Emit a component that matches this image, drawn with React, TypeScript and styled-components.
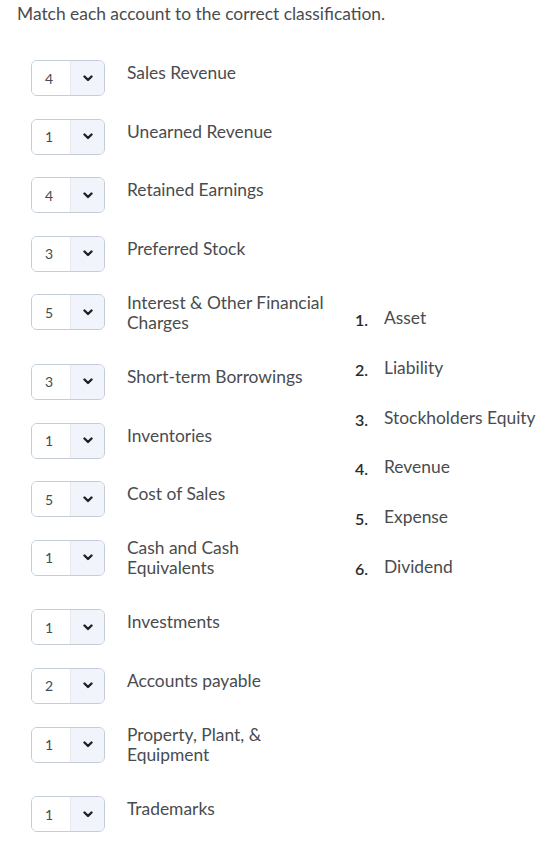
import React from "react";
import styled, { createGlobalStyle } from "styled-components";

const GlobalStyle = createGlobalStyle`
  html, body { margin: 0; padding: 0; background: #ffffff; }
  body { font-family: Lato, "Open Sans", "Liberation Sans", sans-serif; color: #494c4e; }
`;

const Page = styled.div`
  padding: 4px 0 0 17px;
  width: 560px;
  box-sizing: border-box;
`;

const Prompt = styled.p`
  margin: 0;
  font-size: 17.4px;
  line-height: 20px;
  color: #494c4e;
`;

const Content = styled.div`
  display: flex;
  align-items: center;
  gap: 27px;
  margin: 36px 0 0 14px;
`;

const Rows = styled.div`
  display: flex;
  flex-direction: column;
  gap: 22.6px;
`;

const Row = styled.div<{ $wrap?: boolean }>`
  display: flex;
  align-items: flex-start;
  gap: 22px;
  height: ${(p) => (p.$wrap ? 47 : 36)}px;
`;

const SelectBox = styled.div`
  display: flex;
  width: 74px;
  height: 36px;
  box-sizing: border-box;
  border: 1px solid #c4ccd6;
  border-radius: 6px;
  overflow: hidden;
  flex: none;
`;

const SelectValue = styled.div`
  width: 39px;
  display: flex;
  align-items: center;
  padding-left: 13px;
  box-sizing: border-box;
  font-size: 14px;
  color: #494c4e;
  background: #ffffff;
  border-right: 1px solid #e6eaf0;
`;

const SelectArrow = styled.div`
  flex: 1;
  display: flex;
  align-items: center;
  justify-content: center;
  background: #f1f5fb;
  color: #202122;
`;

const Label = styled.div<{ $wrap?: boolean }>`
  width: 201px;
  font-size: 17.4px;
  line-height: 20px;
  color: #494c4e;
  margin-top: ${(p) => (p.$wrap ? -1.5 : 3)}px;
`;

const Choices = styled.ol`
  list-style: none;
  margin: 0 0 5px 0;
  padding: 0;
  display: flex;
  flex-direction: column;
  gap: 27.7px;
`;

const Choice = styled.li`
  display: flex;
  align-items: flex-start;
  font-size: 17.4px;
  line-height: 20px;
  color: #494c4e;
`;

const ChoiceNum = styled.span`
  width: 29px;
  flex: none;
  padding-top: 2px;
  font-weight: 600;
  color: #2a2b2c;
  font-size: 16px;
`;

const Chevron = () => (
  <svg width="10" height="7" viewBox="0 0 10 7" aria-hidden="true">
    <path d="M1.5 1.5 L5 5 L8.5 1.5" fill="none" stroke="currentColor" strokeWidth="2.4" strokeLinecap="round" strokeLinejoin="round" />
  </svg>
);

const items: { value: number; label: string; wrap?: boolean }[] = [
  { value: 4, label: "Sales Revenue" },
  { value: 1, label: "Unearned Revenue" },
  { value: 4, label: "Retained Earnings" },
  { value: 3, label: "Preferred Stock" },
  { value: 5, label: "Interest & Other Financial Charges", wrap: true },
  { value: 3, label: "Short-term Borrowings" },
  { value: 1, label: "Inventories" },
  { value: 5, label: "Cost of Sales" },
  { value: 1, label: "Cash and Cash Equivalents", wrap: true },
  { value: 1, label: "Investments" },
  { value: 2, label: "Accounts payable" },
  { value: 1, label: "Property, Plant, & Equipment", wrap: true },
  { value: 1, label: "Trademarks" },
];

const choices = ["Asset", "Liability", "Stockholders Equity", "Revenue", "Expense", "Dividend"];

export default function App() {
  return (
    <>
      <GlobalStyle />
      <Page>
        <Prompt>Match each account to the correct classification.</Prompt>
        <Content>
          <Rows>
            {items.map((it, i) => (
              <Row key={i} $wrap={it.wrap}>
                <SelectBox>
                  <SelectValue>{it.value}</SelectValue>
                  <SelectArrow>
                    <Chevron />
                  </SelectArrow>
                </SelectBox>
                <Label $wrap={it.wrap}>{it.label}</Label>
              </Row>
            ))}
          </Rows>
          <Choices>
            {choices.map((c, i) => (
              <Choice key={c}>
                <ChoiceNum>{i + 1}.</ChoiceNum>
                <span>{c}</span>
              </Choice>
            ))}
          </Choices>
        </Content>
      </Page>
    </>
  );
}
